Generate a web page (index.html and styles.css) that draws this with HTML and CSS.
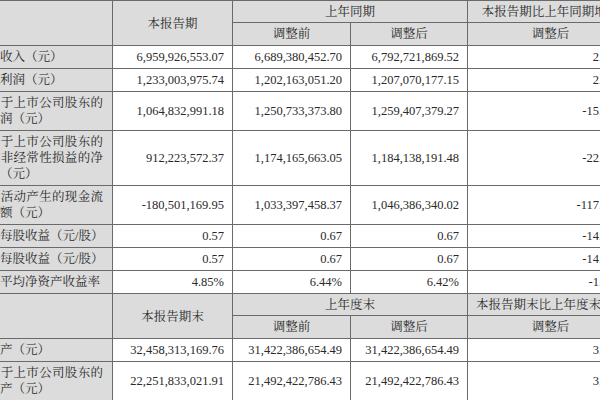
FILE: index.html
```html
<!DOCTYPE html>
<html lang="zh-CN">
<head>
<meta charset="utf-8">
<title>主要会计数据和财务指标</title>
<link rel="stylesheet" href="styles.css">
</head>
<body>
<table class="fin">
  <colgroup>
    <col class="c-label">
    <col class="c-cur">
    <col class="c-prev">
    <col class="c-adj">
    <col class="c-chg">
  </colgroup>
  <tbody>
    <tr class="hrow top">
      <th class="lab" rowspan="2"></th>
      <th rowspan="2">本报告期</th>
      <th colspan="2">上年同期</th>
      <th>本报告期比上年同期增减</th>
    </tr>
    <tr class="hrow">
      <th>调整前</th>
      <th>调整后</th>
      <th>调整后</th>
    </tr>
    <tr>
      <td class="lab">营业收入（元）</td>
      <td>6,959,926,553.07</td><td>6,689,380,452.70</td><td>6,792,721,869.52</td><td>2.46%</td>
    </tr>
    <tr>
      <td class="lab">营业利润（元）</td>
      <td>1,233,003,975.74</td><td>1,202,163,051.20</td><td>1,207,070,177.15</td><td>2.15%</td>
    </tr>
    <tr>
      <td class="lab">归属于上市公司股东的净利润（元）</td>
      <td>1,064,832,991.18</td><td>1,250,733,373.80</td><td>1,259,407,379.27</td><td>-15.45%</td>
    </tr>
    <tr>
      <td class="lab">归属于上市公司股东的扣除非经常性损益的净利润（元）</td>
      <td>912,223,572.37</td><td>1,174,165,663.05</td><td>1,184,138,191.48</td><td>-22.96%</td>
    </tr>
    <tr>
      <td class="lab">经营活动产生的现金流量净额（元）</td>
      <td>-180,501,169.95</td><td>1,033,397,458.37</td><td>1,046,386,340.02</td><td>-117.25%</td>
    </tr>
    <tr>
      <td class="lab">基本每股收益（元/股）</td>
      <td>0.57</td><td>0.67</td><td>0.67</td><td>-14.93%</td>
    </tr>
    <tr>
      <td class="lab">稀释每股收益（元/股）</td>
      <td>0.57</td><td>0.67</td><td>0.67</td><td>-14.93%</td>
    </tr>
    <tr>
      <td class="lab">加权平均净资产收益率</td>
      <td>4.85%</td><td>6.44%</td><td>6.42%</td><td>-1.57%</td>
    </tr>
    <tr class="hrow top">
      <th class="lab" rowspan="2"></th>
      <th rowspan="2">本报告期末</th>
      <th colspan="2">上年度末</th>
      <th>本报告期末比上年度末增减</th>
    </tr>
    <tr class="hrow">
      <th>调整前</th>
      <th>调整后</th>
      <th>调整后</th>
    </tr>
    <tr>
      <td class="lab">总资产（元）</td>
      <td>32,458,313,169.76</td><td>31,422,386,654.49</td><td>31,422,386,654.49</td><td>3.30%</td>
    </tr>
    <tr>
      <td class="lab">归属于上市公司股东的净资产（元）</td>
      <td>22,251,833,021.91</td><td>21,492,422,786.43</td><td>21,492,422,786.43</td><td>3.53%</td>
    </tr>
  </tbody>
</table>
</body>
</html>
```

FILE: styles.css
```css
html, body {
  margin: 0;
  padding: 0;
  background: #ffffff;
  overflow: hidden;
}

body {
  width: 600px;
  height: 400px;
}

.fin {
  border-collapse: collapse;
  table-layout: fixed;
  width: 663px;
  margin-left: -30px;
  font-family: "Liberation Serif", "Noto Serif CJK SC", "Noto Sans CJK SC", serif;
  font-size: 12.5px;
  line-height: 16px;
  color: #2a2a2a;
}

.c-label { width: 142px; }
.c-cur { width: 120px; }
.c-prev { width: 118px; }
.c-adj { width: 117px; }
.c-chg { width: 166px; }

.fin th,
.fin td {
  border: 1px solid #6a6a6a;
  padding: 3px 8px 3px 8px;
  vertical-align: middle;
}

.fin th {
  background: #dcdcdc;
  font-weight: normal;
  text-align: center;
  white-space: nowrap;
}

.fin .top th {
  padding-bottom: 2px;
}

.fin td {
  background: #ffffff;
  text-align: right;
  white-space: nowrap;
}

.fin td.lab,
.fin th.lab {
  background: #dcdcdc;
  text-align: justify;
  white-space: normal;
  padding-left: 4px;
  padding-right: 9px;
}
```
